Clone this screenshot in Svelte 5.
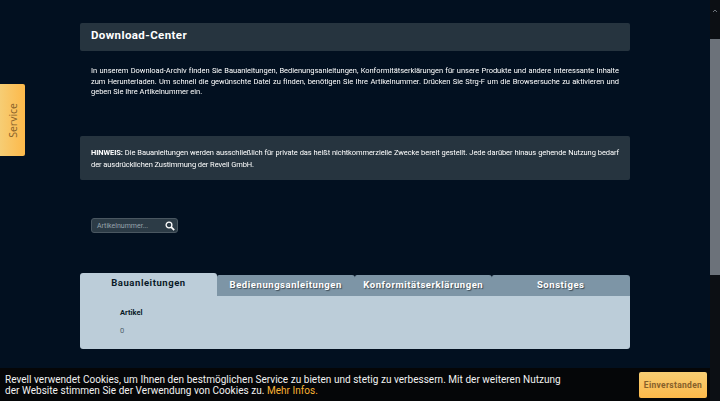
<script>
  const tabs = ['Bedienungsanleitungen', 'Konformitätserklärungen', 'Sonstiges'];
</script>

<div class="page">
  <main class="main">
    <h1 class="head">Download-Center</h1>
    <p class="intro">In unserem Download-Archiv finden Sie Bauanleitungen, Bedienungsanleitungen, Konformitätserklärungen für unsere Produkte und andere interessante Inhalte zum Herunterladen. Um schnell die gewünschte Datei zu finden, benötigen Sie Ihre Artikelnummer. Drücken Sie Strg-F um die Browsersuche zu aktivieren und geben Sie Ihre Artikelnummer ein.</p>
    <div class="note"><p><b>HINWEIS:</b> Die Bauanleitungen werden ausschließlich für private das heißt nichtkommerzielle Zwecke bereit gestellt. Jede darüber hinaus gehende Nutzung bedarf der ausdrücklichen Zustimmung der Revell GmbH.</p></div>
    <div class="search">
      <span>Artikelnummer...</span>
      <svg width="10" height="10" viewBox="0 0 10 10"><circle cx="4" cy="4" r="2.9" fill="none" stroke="#fff" stroke-width="1.3"/><path d="M6.2 6.2 9.2 9.2" stroke="#fff" stroke-width="1.7"/></svg>
    </div>
    <section class="tabs">
      <div class="tabrow">
        <div class="tab active">Bauanleitungen</div>
        {#each tabs as t}
          <div class="tab">{t}</div>
        {/each}
      </div>
      <div class="panel">
        <b>Artikel</b>
        <span>0</span>
      </div>
    </section>
  </main>
  <div class="bar">
    <div class="up"><svg width="10" height="8" viewBox="0 0 10 8"><path d="M3 5 5 3 7 5" fill="none" stroke="#6c727a"/></svg></div>
    <div class="thumb"></div>
    <div class="down"><svg width="10" height="8" viewBox="0 0 10 8"><path d="M3 3 5 5 7 3" fill="none" stroke="#6c727a"/></svg></div>
  </div>
  <div class="service"><span>Service</span></div>
  <div class="cookie">
    <p>Revell verwendet Cookies, um Ihnen den bestmöglichen Service zu bieten und stetig zu verbessern. Mit der weiteren Nutzung<br/>der Website stimmen Sie der Verwendung von Cookies zu. <a href="#x">Mehr Infos.</a></p>
    <button>Einverstanden</button>
  </div>
</div>

<style>
  :global(body) { margin: 0; background: #021020; overflow: hidden; }
  .page { height: 401px; width: 720px; position: relative; overflow: hidden; background: #021020; font-family: Roboto, sans-serif; color: #f0f4f6; }
  .main { width: 550px; margin-left: 80px; padding-top: 23px; display: flex; flex-direction: column; }
  .head { margin: 0; height: 28px; box-sizing: border-box; padding: 5px 11px 0; background: #26343f; border-radius: 2px; font: 700 11.5px/14px Roboto, sans-serif; letter-spacing: 0.4px; color: #fff; }
  .intro { margin: 15px 0 0; padding: 0 11px; font-size: 7.5px; line-height: 10.5px; text-align: justify; height: 70px; letter-spacing: -0.03px; color: #fff; will-change: transform; }
  .note { height: 44px; box-sizing: border-box; padding: 11px 11px 0; background: #26343f; border-radius: 2px; }
  .note p { margin: 0; font-size: 7.5px; line-height: 12px; text-align: justify; letter-spacing: -0.08px; color: #fff; will-change: transform; }
  .search { margin: 38px 0 0 11px; width: 87px; height: 15px; box-sizing: border-box; padding: 0 2px 0 5px; display: flex; align-items: center; justify-content: space-between; background: #2c3b46; border: 1px solid #4a5761; border-radius: 3px; font-size: 7px; color: #98a4ad; }
  .tabs { margin-top: 40px; }
  .tabrow { display: flex; height: 23px; align-items: flex-end; }
  .tab { flex: 0 0 137.5px; height: 21px; box-sizing: border-box; padding-top: 3px; text-align: center; background: #7d95a6; border-radius: 2px 3px 0 0; font-size: 9.5px; line-height: 14px; font-weight: 700; letter-spacing: 0.55px; color: #fff; text-shadow: 1px 1px 1px #3d4b55; }
  .tab.active { flex: 0 0 137px; height: 23px; background: #bccdd9; color: #0a1a28; text-shadow: none; border-radius: 3px 3px 0 0; padding-top: 3px; }
  .panel { height: 53px; box-sizing: border-box; background: #bccdd9; border-radius: 0 0 3px 3px; padding: 12px 40px 0; display: flex; flex-direction: column; gap: 8px; font-size: 7.5px; line-height: 10px; color: #4f5f6b; }
  .panel b { color: #0a1a28; }
  .bar { position: absolute; top: 0; right: 0; width: 10px; height: 401px; background: #0c0f14; display: flex; flex-direction: column; justify-content: space-between; }
  .up { height: 39px; }
  .down { height: 8px; margin-top: auto; }
  .thumb { height: 236px; background: #6c727a; }
  .service { position: absolute; left: 0; top: 84px; width: 25px; height: 72px; box-sizing: border-box; display: flex; align-items: center; justify-content: center; background: linear-gradient(90deg, #f6cd74, #fdb94a); border-radius: 0 2px 2px 0; }
  .service span { writing-mode: vertical-rl; transform: rotate(180deg); font: 400 10.5px "Open Sans", sans-serif; color: #86602a; }
  .cookie { position: absolute; left: 0; bottom: 0; width: 710px; height: 33px; box-sizing: border-box; background: #050608; display: flex; justify-content: space-between; align-items: center; padding: 0 3px 0 5px; }
  .cookie p { margin: 0; font-size: 10px; line-height: 11px; letter-spacing: 0.03px; color: #f2f2f2; }
  .cookie a { color: #f9b233; text-decoration: none; }
  .cookie button { width: 68px; height: 26px; padding: 0; border: 0; border-radius: 2px; background: linear-gradient(180deg, #f6cd74, #fdb94a); font: 700 8.5px Roboto, sans-serif; letter-spacing: 0.3px; color: #86602a; }
</style>
